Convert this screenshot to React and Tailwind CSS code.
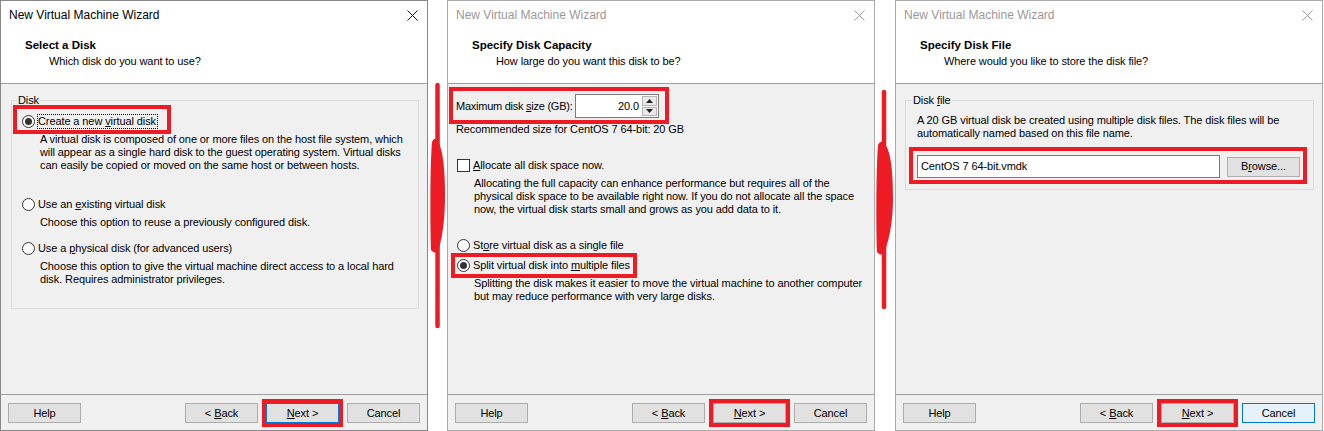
import React from "react";

function Radio({ checked }) {
  return (
    <span className="w-[13px] h-[13px] rounded-full border border-[#333333] bg-white flex items-center justify-center shrink-0">
      {checked && <span className="w-[7px] h-[7px] rounded-full bg-[#333333]" />}
    </span>
  );
}

function Check() {
  return <span className="w-[13px] h-[13px] border border-[#333333] bg-white shrink-0" />;
}

function XIcon({ color }) {
  return (
    <svg width="11" height="11" viewBox="0 0 11 11">
      <path d="M0.5 0.5L10.5 10.5M10.5 0.5L0.5 10.5" stroke={color} strokeWidth="1" />
    </svg>
  );
}

function Lines({ lines, cls }) {
  return (
    <div className={cls}>
      {lines.map((l, i) => (
        <div key={i} className="whitespace-nowrap leading-[13px] h-[13px]">
          {l}
        </div>
      ))}
    </div>
  );
}

function Window({ active, title, sub, children, nextBlue, cancelFocus }) {
  return (
    <div
      className={`w-[428px] h-[431px] shrink-0 border flex flex-col ${
        active ? "border-[#888888]" : "border-[#aaaaaa]"
      }`}
    >
      <div className="h-[82px] bg-white flex flex-col">
        <div className="h-[28px] flex items-center justify-between pl-[8px] pr-[9px]">
          <span
            className={`text-[12px] leading-[14px] tracking-normal ${
              active ? "text-black" : "text-[#999999]"
            }`}
          >
            New Virtual Machine Wizard
          </span>
          <XIcon color={active ? "#111111" : "#999999"} />
        </div>
        <div className="mt-[9px] pl-[24px] text-[11.5px] font-bold leading-[14px] h-[14px] tracking-normal">
          {title}
        </div>
        <div className="mt-[2px] pl-[48px] leading-[14px] h-[14px]">{sub}</div>
      </div>
      <div className="h-px bg-[#a0a0a0]" />
      <div className="h-[310px] bg-[#f0f0f0] flex flex-col">{children}</div>
      <div className="h-px bg-[#a0a0a0]" />
      <div className="flex-1 bg-[#f0f0f0] flex items-start pt-[8px] pl-[7px]">
        <div className="w-[73px] h-[20px] border border-[#adadad] bg-[#e1e1e1] flex items-center justify-center">
          Help
        </div>
        <div className="ml-[104px] w-[73px] h-[20px] border border-[#adadad] bg-[#e1e1e1] flex items-center justify-center">
          &lt; <u className="ml-[3px]">B</u>ack
        </div>
        <div className="relative ml-[8px]">
          <div
            className={`w-[73px] h-[20px] border flex items-center justify-center bg-[#e1e1e1] ${
              nextBlue ? "border-[#0078d7]" : "border-[#adadad]"
            }`}
          >
            <u>N</u>ext &gt;
          </div>
          <div className="absolute left-[-4px] top-[-4px] w-[81px] h-[28px] border-4 border-[#ed1c24]" />
        </div>
        <div
          className={`ml-[8px] w-[73px] h-[20px] border flex items-center justify-center ${
            cancelFocus ? "border-[#0078d7] bg-[#e5f1fb]" : "border-[#adadad] bg-[#e1e1e1]"
          }`}
        >
          Cancel
        </div>
      </div>
    </div>
  );
}

function Panel1() {
  return (
    <div className="mt-[16px] ml-[10px] w-[408px] h-[209px] border border-[#dcdcdc] relative">
      <span className="absolute left-[5px] top-[-7px] bg-[#f0f0f0] px-[1px] leading-[13px]">Disk</span>
      <div className="relative mt-[12px] h-[16px] flex items-center pl-[10px]">
        <Radio checked />
        <span className="ml-[2px] border border-dotted border-black leading-[13px] pr-[1px]">
          Create a new <u>v</u>irtual disk
        </span>
        <div className="absolute left-[1px] top-[-8px] w-[158px] h-[29px] border-4 border-[#ed1c24]" />
      </div>
      <Lines
        cls="mt-[4px] pl-[28px]"
        lines={[
          "A virtual disk is composed of one or more files on the host file system, which",
          "will appear as a single hard disk to the guest operating system. Virtual disks",
          "can easily be copied or moved on the same host or between hosts.",
        ]}
      />
      <div className="mt-[24px] h-[16px] flex items-center pl-[10px]">
        <Radio />
        <span className="ml-[3px]">
          Use an <u>e</u>xisting virtual disk
        </span>
      </div>
      <Lines cls="mt-[4px] pl-[28px]" lines={["Choose this option to reuse a previously configured disk."]} />
      <div className="mt-[11px] h-[16px] flex items-center pl-[10px]">
        <Radio />
        <span className="ml-[3px]">
          Use a <u>p</u>hysical disk (for advanced users)
        </span>
      </div>
      <Lines
        cls="mt-[4px] pl-[28px]"
        lines={[
          "Choose this option to give the virtual machine direct access to a local hard",
          "disk. Requires administrator privileges.",
        ]}
      />
    </div>
  );
}

function Panel2() {
  return (
    <div className="flex flex-col">
      <div className="relative mt-[10px] h-[24px] flex items-center pl-[8px]">
        <span className="w-[119px] shrink-0 whitespace-nowrap tracking-[-0.25px]">
          Maximum disk <u>s</u>ize (GB):
        </span>
        <div className="w-[84px] h-[24px] shrink-0 border border-[#7a7a7a] bg-white flex">
          <div className="flex-1 text-right pr-[3px] leading-[22px]">20.0</div>
          <div className="w-[16px] flex flex-col gap-px py-px pr-px">
            <div className="flex-1 bg-[#e9e9e9] border border-[#b4b4b4] flex items-center justify-center">
              <svg width="7" height="4" viewBox="0 0 7 4">
                <path d="M0 4L3.5 0L7 4Z" fill="#222222" />
              </svg>
            </div>
            <div className="flex-1 bg-[#e9e9e9] border border-[#b4b4b4] flex items-center justify-center">
              <svg width="7" height="4" viewBox="0 0 7 4">
                <path d="M0 0L3.5 4L7 0Z" fill="#222222" />
              </svg>
            </div>
          </div>
        </div>
        <div className="absolute left-[1px] top-[-7px] w-[220px] h-[37px] border-4 border-[#ed1c24]" />
      </div>
      <div className="mt-[5px] pl-[8px] leading-[13px] h-[13px] whitespace-nowrap">
        Recommended size for CentOS 7 64-bit: 20 GB
      </div>
      <div className="mt-[21px] h-[16px] flex items-center pl-[9px]">
        <Check />
        <span className="ml-[3px]">
          <u>A</u>llocate all disk space now.
        </span>
      </div>
      <Lines
        cls="mt-[4px] pl-[26px]"
        lines={[
          "Allocating the full capacity can enhance performance but requires all of the",
          "physical disk space to be available right now. If you do not allocate all the space",
          "now, the virtual disk starts small and grows as you add data to it.",
        ]}
      />
      <div className="mt-[21px] h-[16px] flex items-center pl-[9px]">
        <Radio />
        <span className="ml-[3px]">
          St<u>o</u>re virtual disk as a single file
        </span>
      </div>
      <div className="relative mt-[4px] h-[16px] flex items-center pl-[9px]">
        <Radio checked />
        <span className="ml-[3px]">
          Split virtual disk into <u>m</u>ultiple files
        </span>
        <div className="absolute left-[3px] top-[-4px] w-[186px] h-[25px] border-4 border-[#ed1c24]" />
      </div>
      <Lines
        cls="mt-[4px] pl-[26px]"
        lines={[
          "Splitting the disk makes it easier to move the virtual machine to another computer",
          "but may reduce performance with very large disks.",
        ]}
      />
    </div>
  );
}

function Panel3() {
  return (
    <div className="mt-[16px] ml-[9px] w-[409px] h-[90px] border border-[#dcdcdc] relative">
      <span className="absolute left-[6px] top-[-7px] bg-[#f0f0f0] px-[1px] leading-[13px]">
        Disk <u>f</u>ile
      </span>
      <Lines
        cls="mt-[13px] pl-[11px]"
        lines={[
          "A 20 GB virtual disk be created using multiple disk files. The disk files will be",
          "automatically named based on this file name.",
        ]}
      />
      <div className="relative mt-[15px] h-[23px] flex items-center pl-[11px]">
        <div className="w-[303px] h-[23px] border border-[#7a7a7a] bg-white pl-[3px] leading-[21px]">
          CentOS 7 64-bit.vmdk
        </div>
        <div className="ml-[7px] w-[73px] h-[20px] border border-[#adadad] bg-[#e1e1e1] flex items-center justify-center">
          B<u>r</u>owse...
        </div>
        <div className="absolute left-[3px] top-[-8px] w-[398px] h-[37px] border-4 border-[#ed1c24]" />
      </div>
    </div>
  );
}

export default function App() {
  return (
    <div className="w-[1324px] h-[431px] bg-white flex font-['Liberation_Sans',Arial,sans-serif] text-[11px] leading-[13px] tracking-[-0.1px] text-black overflow-hidden">
      <Window active title="Select a Disk" sub="Which disk do you want to use?" nextBlue>
        <Panel1 />
      </Window>
      <div className="w-[19px] shrink-0">
        <svg width="19" height="431" viewBox="0 0 19 431">
          <path d="M9.5 85 C9 150 10 250 9.5 326" stroke="#ed1c24" strokeWidth="4.5" strokeLinecap="round" fill="none" />
          <path
            d="M4 142 C2 165 2 225 3 250 C6 254 9 253 11 248 C15 235 17 215 17 195 C17 170 15 150 10 141 C8 138 6 138 4 142 Z"
            fill="#ed1c24"
          />
        </svg>
      </div>
      <Window title="Specify Disk Capacity" sub="How large do you want this disk to be?">
        <Panel2 />
      </Window>
      <div className="w-[20px] shrink-0">
        <svg width="20" height="431" viewBox="0 0 20 431">
          <path d="M9 92 C8.5 150 9.5 250 9 307" stroke="#ed1c24" strokeWidth="4.5" strokeLinecap="round" fill="none" />
          <path
            d="M3 145 C1 170 1 230 2 252 C5 256 8 255 10 250 C15 238 18 218 18 198 C18 172 16 152 10 144 C8 141 5 141 3 145 Z"
            fill="#ed1c24"
          />
        </svg>
      </div>
      <Window title="Specify Disk File" sub="Where would you like to store the disk file?" cancelFocus>
        <Panel3 />
      </Window>
    </div>
  );
}
